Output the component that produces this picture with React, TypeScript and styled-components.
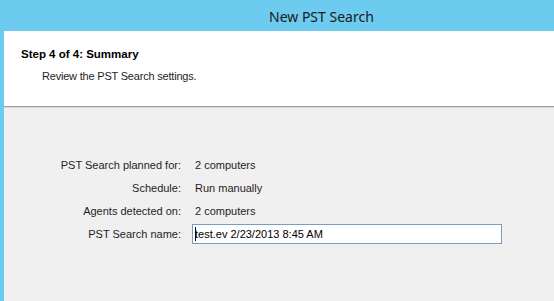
import * as React from 'react'
import styled, { createGlobalStyle } from 'styled-components'

const GlobalStyle = createGlobalStyle`
  html, body {
    margin: 0;
    padding: 0;
    background: #f0f0f0;
  }
`

interface SummaryRow {
  label: string
  value: string
}

const rows: SummaryRow[] = [
  { label: 'PST Search planned for:', value: '2 computers' },
  { label: 'Schedule:', value: 'Run manually' },
  { label: 'Agents detected on:', value: '2 computers' }
]

export default function App() {
  return (
    <React.Fragment>
      <GlobalStyle />
      <Window>
        <TitleBar>
          <Title>New PST Search</Title>
        </TitleBar>
        <Header>
          <StepTitle>Step 4 of 4: Summary</StepTitle>
          <StepHint>Review the PST Search settings.</StepHint>
        </Header>
        <Content>
          <SummaryGrid>
            {rows.map(row => (
              <React.Fragment key={row.label}>
                <Label>{row.label}</Label>
                <Value>{row.value}</Value>
              </React.Fragment>
            ))}
            <Label>PST Search name:</Label>
            <TextBox>
              <Caret />
              test.ev 2/23/2013 8:45 AM
            </TextBox>
          </SummaryGrid>
        </Content>
      </Window>
    </React.Fragment>
  )
}

const Window = styled.div`
  display: flex;
  flex-direction: column;
  height: 301px;
  border-left: 4px solid #6ccbee;
  background: #f0f0f0;
  font-family: 'Liberation Sans', Arial, sans-serif;
  font-size: 11px;
  color: #1e1e1e;
  overflow: hidden;
`

const TitleBar = styled.div`
  height: 31px;
  margin-left: -4px;
  background: #6ccbee;
  display: flex;
  align-items: center;
  padding-left: 269px;
`

const Title = styled.div`
  font-family: 'Noto Sans', 'Open Sans', sans-serif;
  font-size: 14px;
  color: #1a1a1a;
  line-height: 20px;
  margin-top: 2px;
`

const Header = styled.div`
  height: 76px;
  background: #fff;
  border-bottom: 1px solid #a0a0a0;
  box-shadow: 0 1px 0 #d8d8d8;
  padding: 16px 0 0 17px;
  box-sizing: border-box;
`

const StepTitle = styled.div`
  font-weight: bold;
  font-size: 11.5px;
  line-height: 14px;
  color: #000;
`

const StepHint = styled.div`
  line-height: 14px;
  margin: 8px 0 0 21px;
  letter-spacing: -0.2px;
`

const Content = styled.div`
  flex: 1;
  padding-top: 46px;
`

const SummaryGrid = styled.div`
  display: grid;
  grid-template-columns: 177px 310px;
  grid-auto-rows: 23px;
  align-items: center;
  column-gap: 11px;
`

const Label = styled.div`
  text-align: right;
`

const Value = styled.div`
  padding-left: 3px;
`

const TextBox = styled.div`
  height: 20px;
  box-sizing: border-box;
  border: 1px solid #7a9cc0;
  background: #fff;
  display: flex;
  align-items: center;
  padding-left: 2px;
  color: #000;
  white-space: nowrap;
`

const Caret = styled.span`
  display: inline-block;
  width: 1px;
  height: 14px;
  background: #000;
  margin-right: -1px;
`
